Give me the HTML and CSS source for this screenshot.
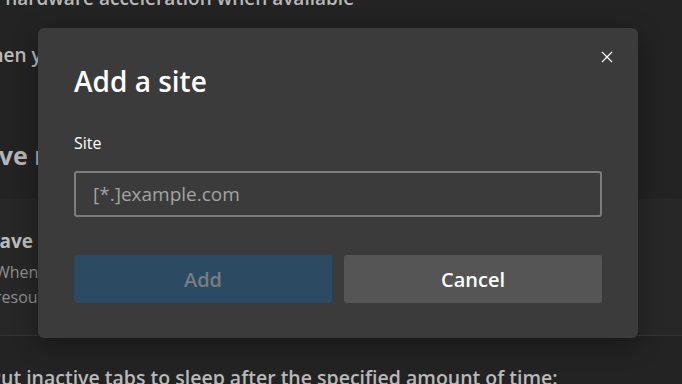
FILE: index.html
```html
<!DOCTYPE html>
<html lang="en">
<head>
  <meta charset="UTF-8">
  <meta name="viewport" content="width=device-width, initial-scale=1.0">
  <title>Add a site</title>
  <link rel="stylesheet" href="styles.css">
</head>
<body>

  <div class="settings">
    <p class="row-text top">Use hardware acceleration when available</p>
    <p class="row-text second">when you close the browser window</p>

    <h2 class="group-title">Save resources</h2>

    <div class="card">
      <h3>Save resources with sleeping tabs</h3>
      <p>When this is on, inactive tabs will go to sleep after a specified time to save system</p>
      <p>resources. Learn more</p>
    </div>

    <p class="row-text bottom">Put inactive tabs to sleep after the specified amount of time:</p>
  </div>

  <div class="dialog" role="dialog">
    <button class="close" aria-label="Close">
      <svg width="12" height="12" viewBox="0 0 12 12">
        <path d="M1 1 L11 11 M11 1 L1 11" stroke="#fff" stroke-width="1.3" fill="none"/>
      </svg>
    </button>

    <h1>Add a site</h1>

    <label for="site">Site</label>
    <input type="text" id="site" placeholder="[*.]example.com">

    <div class="actions">
      <button class="btn btn-add" disabled>Add</button>
      <button class="btn btn-cancel">Cancel</button>
    </div>
  </div>

</body>
</html>
```

FILE: styles.css
```css
body {
  font-family: 'Open Sans', 'Noto Sans', sans-serif;
  background: #232323;
  color: #fff;
  margin: 0;
  padding: 0;
  width: 682px;
  height: 384px;
  overflow: hidden;
  position: relative;
}

/* page behind the dialog, already dimmed */
.settings {
  margin-left: -30px;
  white-space: nowrap;
}

.row-text {
  margin: 0;
  font-size: 19px;
  line-height: 26px;
  font-weight: 600;
  color: #b9b9b9;
}

.row-text.top {
  margin-top: -15px;
  margin-left: -4px;
}

.row-text.second {
  margin-top: 31px;
  margin-left: 6px;
  color: #bdbdbd;
}

.group-title {
  margin: 70px 0 25px 0;
  font-size: 25px;
  line-height: 34px;
  font-weight: 700;
  color: #b5b5b5;
}

.card {
  background: #272727;
  border-top: 1px solid #1f1f1f;
  border-bottom: 1px solid #343434;
  padding: 31px 0 25px 19px;
}

.card h3 {
  margin: 0 0 7px 0;
  font-size: 19px;
  line-height: 24px;
  font-weight: 700;
  color: #bcbcbc;
}

.card p {
  margin: 0 0 0 6px;
  font-size: 16px;
  line-height: 25px;
  color: #8f8f8f;
}

.row-text.bottom {
  margin-top: 29px;
  margin-left: 19px;
  font-size: 19.5px;
}

/* dialog */
.dialog {
  position: absolute;
  left: 38px;
  top: 28px;
  width: 600px;
  height: 310px;
  box-sizing: border-box;
  padding: 35px 36px 0 36px;
  background: #3b3b3b;
  border-radius: 6px;
  box-shadow: 0 6px 24px rgba(0,0,0,0.35);
  display: flex;
  flex-direction: column;
}

.close {
  position: absolute;
  top: 19px;
  right: 21px;
  width: 20px;
  height: 20px;
  padding: 0;
  border: none;
  background: none;
  display: flex;
  align-items: center;
  justify-content: center;
}

.dialog h1 {
  margin: 0;
  font-size: 28px;
  font-weight: 600;
  line-height: 36px;
}

.dialog label {
  margin-top: 33px;
  font-size: 16px;
  line-height: 22px;
}

.dialog input {
  margin-top: 17px;
  height: 46px;
  box-sizing: border-box;
  border: 2px solid #7d7d7d;
  border-radius: 3px;
  background: transparent;
  padding: 0 17px;
  font-family: inherit;
  font-size: 19px;
  color: #fff;
  outline: none;
}

.dialog input::placeholder {
  color: #a3a3a3;
}

.actions {
  margin-top: 38px;
  display: flex;
  gap: 12px;
}

.btn {
  flex: 1;
  height: 48px;
  border: none;
  border-radius: 3px;
  font-family: inherit;
  font-size: 20px;
  font-weight: 600;
}

.btn-add {
  background: #2c4a62;
  color: #787d82;
}

.btn-cancel {
  background: #555555;
  color: #fff;
}
```
